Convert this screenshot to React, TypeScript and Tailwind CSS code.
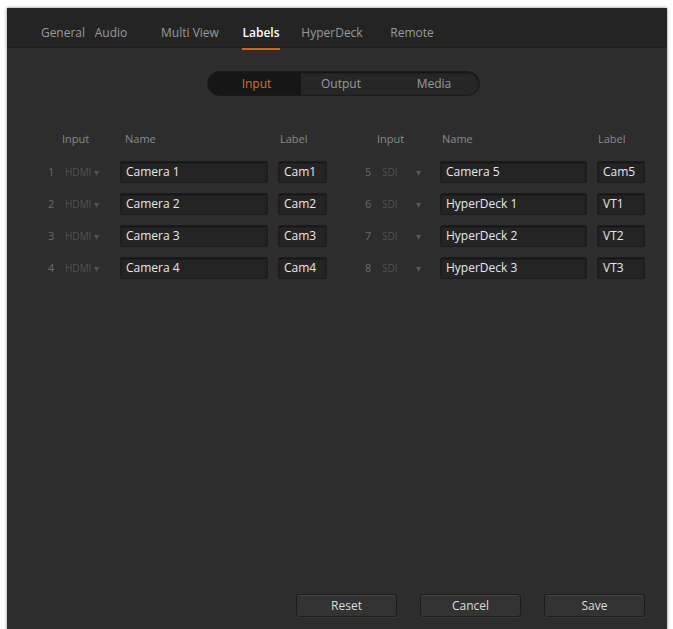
const tabs = [
  { t: "General", w: "w-[48px]" },
  { t: "Audio", w: "w-[48px]" },
  { t: "Multi View", w: "w-[110px]" },
  { t: "Labels", w: "w-[32px]" },
  { t: "HyperDeck", w: "w-[110px]" },
  { t: "Remote", w: "w-[50px]" },
];

const left = [
  { n: "1", src: "HDMI", name: "Camera 1", label: "Cam1" },
  { n: "2", src: "HDMI", name: "Camera 2", label: "Cam2" },
  { n: "3", src: "HDMI", name: "Camera 3", label: "Cam3" },
  { n: "4", src: "HDMI", name: "Camera 4", label: "Cam4" },
];

const right = [
  { n: "5", src: "SDI", name: "Camera 5", label: "Cam5" },
  { n: "6", src: "SDI", name: "HyperDeck 1", label: "VT1" },
  { n: "7", src: "SDI", name: "HyperDeck 2", label: "VT2" },
  { n: "8", src: "SDI", name: "HyperDeck 3", label: "VT3" },
];

type Row = { n: string; src: string; name: string; label: string };

const Field = ({ text, className }: { text: string; className: string }) => (
  <div
    className={`h-[22px] flex items-center px-[5px] bg-[#242424] border border-[#1d1d1d] rounded-[2px] shadow-[inset_0_1px_2px_rgba(0,0,0,0.5)] text-[#e8e8e8] text-[12px] ${className}`}
  >
    {text}
  </div>
);

const LeftColumn = ({ rows }: { rows: Row[] }) => (
  <div className="flex flex-col">
    <div className="flex items-center h-[16px] text-[11px] text-[#8a8a8a]">
      <span className="w-[72px] pl-[14px]">Input</span>
      <span className="w-[158px] pl-[5px]">Name</span>
      <span className="pl-[2px]">Label</span>
    </div>
    <div className="flex flex-col gap-[10px] mt-[14px]">
      {rows.map((r) => (
        <div key={r.n} className="flex items-center">
          <span className="w-[17px] text-[11px] text-[#6a6a6a]">{r.n}</span>
          <span className="w-[55px] text-[10px] text-[#505050]">{r.src} ▾</span>
          <Field text={r.name} className="w-[148px]" />
          <Field text={r.label} className="w-[49px] ml-[10px]" />
        </div>
      ))}
    </div>
  </div>
);

const RightColumn = ({ rows }: { rows: Row[] }) => (
  <div className="flex flex-col">
    <div className="flex items-center h-[16px] text-[11px] text-[#8a8a8a]">
      <span className="w-[75px] pl-[12px]">Input</span>
      <span className="w-[157px] pl-[2px]">Name</span>
      <span className="pl-[1px]">Label</span>
    </div>
    <div className="flex flex-col gap-[10px] mt-[14px]">
      {rows.map((r) => (
        <div key={r.n} className="flex items-center">
          <span className="w-[17px] text-[11px] text-[#6a6a6a]">{r.n}</span>
          <span className="w-[34px] text-[10px] text-[#505050]">{r.src}</span>
          <span className="w-[24px] text-[10px] text-[#585858]">▾</span>
          <Field text={r.name} className="w-[147px]" />
          <Field text={r.label} className="w-[48px] ml-[10px]" />
        </div>
      ))}
    </div>
  </div>
);

export default function App() {
  return (
    <div className="w-[673px] h-[629px] bg-white pt-[8px] pl-[7px] pr-[6px] font-['Open_Sans','Noto_Sans',sans-serif]">
      <div className="h-[621px] bg-[#2d2d2d] flex flex-col shadow-[0_0_3px_rgba(0,0,0,0.5)]">
        {/* Tab bar */}
        <div className="h-[40px] bg-[#242424] flex pl-[32px] border-b border-[#1f1f1f]">
          {tabs.map(({ t, w }) => (
            <div
              key={t}
              className={`h-[40px] flex justify-center relative whitespace-nowrap pt-[16px] text-[12px] ${w} ${
                t === "Labels" ? "text-white font-semibold" : "text-[#9a9a9a]"
              }`}
            >
              <span>{t}</span>
              {t === "Labels" && (
                <span className="absolute bottom-[-2px] left-[-3px] right-[-3px] h-[2px] bg-[#c56a2a]" />
              )}
            </div>
          ))}
        </div>

        {/* Segmented control */}
        <div className="flex mt-[23px] pl-[200px]">
          <div className="flex h-[25px] w-[273px] rounded-full bg-[#262626] border border-[#1a1a1a] shadow-[inset_0_1px_2px_rgba(0,0,0,0.6)] overflow-hidden text-[12px]">
            <div className="w-[93px] flex items-center justify-center bg-[#161616] rounded-l-full text-[#d9722a] pl-[4px]">
              Input
            </div>
            <div className="w-[80px] flex items-center justify-center text-[#9a9a9a]">Output</div>
            <div className="flex-1 flex items-center justify-center text-[#9a9a9a] pl-[8px]">Media</div>
          </div>
        </div>

        {/* Label tables */}
        <div className="flex mt-[35px] pl-[41px]">
          <LeftColumn rows={left} />
          <div className="ml-[38px]">
            <RightColumn rows={right} />
          </div>
        </div>

        <div className="flex-1" />

        {/* Buttons */}
        <div className="flex justify-end gap-[23px] pr-[22px] pb-[12px]">
          {["Reset", "Cancel", "Save"].map((b) => (
            <div
              key={b}
              className="w-[101px] h-[23px] flex items-center justify-center rounded-[3px] bg-[#333333] border border-[#1c1c1c] shadow-[0_1px_1px_rgba(255,255,255,0.05),inset_0_1px_0_rgba(255,255,255,0.08)] text-[12px] text-[#dcdcdc]"
            >
              {b}
            </div>
          ))}
        </div>
      </div>
    </div>
  );
}
